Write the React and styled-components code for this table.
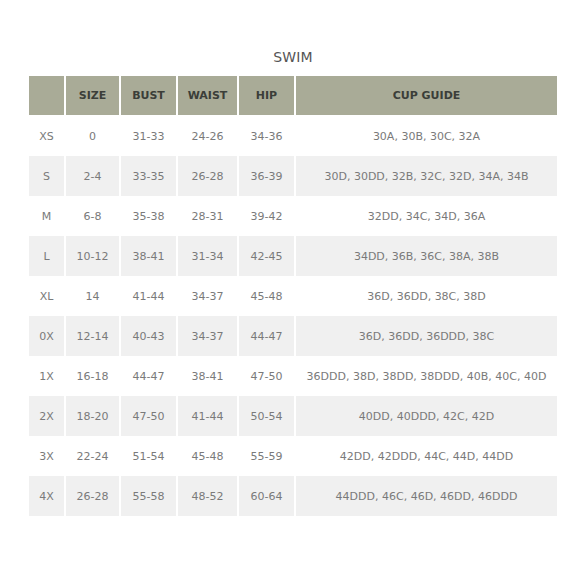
import React from "react";
import styled, { createGlobalStyle } from "styled-components";

const Global = createGlobalStyle`
  html, body { margin: 0; padding: 0; background: #ffffff; }
  body { font-family: "DejaVu Sans", "Liberation Sans", sans-serif; }
`;

const Page = styled.div`
  width: 580px;
  padding: 49px 0 0 29px;
  box-sizing: border-box;
`;

const Chart = styled.section`
  width: 528px;
  display: flex;
  flex-direction: column;
`;

const Title = styled.h2`
  margin: 0 0 11px;
  height: 16px;
  line-height: 16px;
  text-align: center;
  font-size: 14px;
  font-weight: 400;
  color: #555555;
  letter-spacing: 0.2px;
`;

const Row = styled.div`
  display: grid;
  grid-template-columns: 35px 53px 55px 59px 55px 1fr;
  column-gap: 2px;
  height: ${(p) => (p.$head ? 39 : 40)}px;
  margin-bottom: ${(p) => (p.$head ? 1 : 0)}px;
`;

const Cell = styled.div`
  display: flex;
  align-items: center;
  justify-content: center;
  background: ${(p) => (p.$head ? "#a9ab97" : p.$shade ? "#f0f0f0" : "#ffffff")};
  color: ${(p) => (p.$head ? "#3b3e39" : "#7a7a7a")};
  font-size: 11px;
  font-weight: ${(p) => (p.$head ? 700 : 400)};
  white-space: nowrap;
`;

const headers = ["", "SIZE", "BUST", "WAIST", "HIP", "CUP GUIDE"];

const rows = [
  ["XS", "0", "31-33", "24-26", "34-36", "30A, 30B, 30C, 32A"],
  ["S", "2-4", "33-35", "26-28", "36-39", "30D, 30DD, 32B, 32C, 32D, 34A, 34B"],
  ["M", "6-8", "35-38", "28-31", "39-42", "32DD, 34C, 34D, 36A"],
  ["L", "10-12", "38-41", "31-34", "42-45", "34DD, 36B, 36C, 38A, 38B"],
  ["XL", "14", "41-44", "34-37", "45-48", "36D, 36DD, 38C, 38D"],
  ["0X", "12-14", "40-43", "34-37", "44-47", "36D, 36DD, 36DDD, 38C"],
  ["1X", "16-18", "44-47", "38-41", "47-50", "36DDD, 38D, 38DD, 38DDD, 40B, 40C, 40D"],
  ["2X", "18-20", "47-50", "41-44", "50-54", "40DD, 40DDD, 42C, 42D"],
  ["3X", "22-24", "51-54", "45-48", "55-59", "42DD, 42DDD, 44C, 44D, 44DD"],
  ["4X", "26-28", "55-58", "48-52", "60-64", "44DDD, 46C, 46D, 46DD, 46DDD"],
];

export default function App() {
  return (
    <Page>
      <Global />
      <Chart>
        <Title>SWIM</Title>
        <Row $head>
          {headers.map((h, i) => (
            <Cell key={i} $head>
              {h}
            </Cell>
          ))}
        </Row>
        {rows.map((r, ri) => (
          <Row key={ri}>
            {r.map((c, ci) => (
              <Cell key={ci} $shade={ri % 2 === 1}>
                {c}
              </Cell>
            ))}
          </Row>
        ))}
      </Chart>
    </Page>
  );
}
